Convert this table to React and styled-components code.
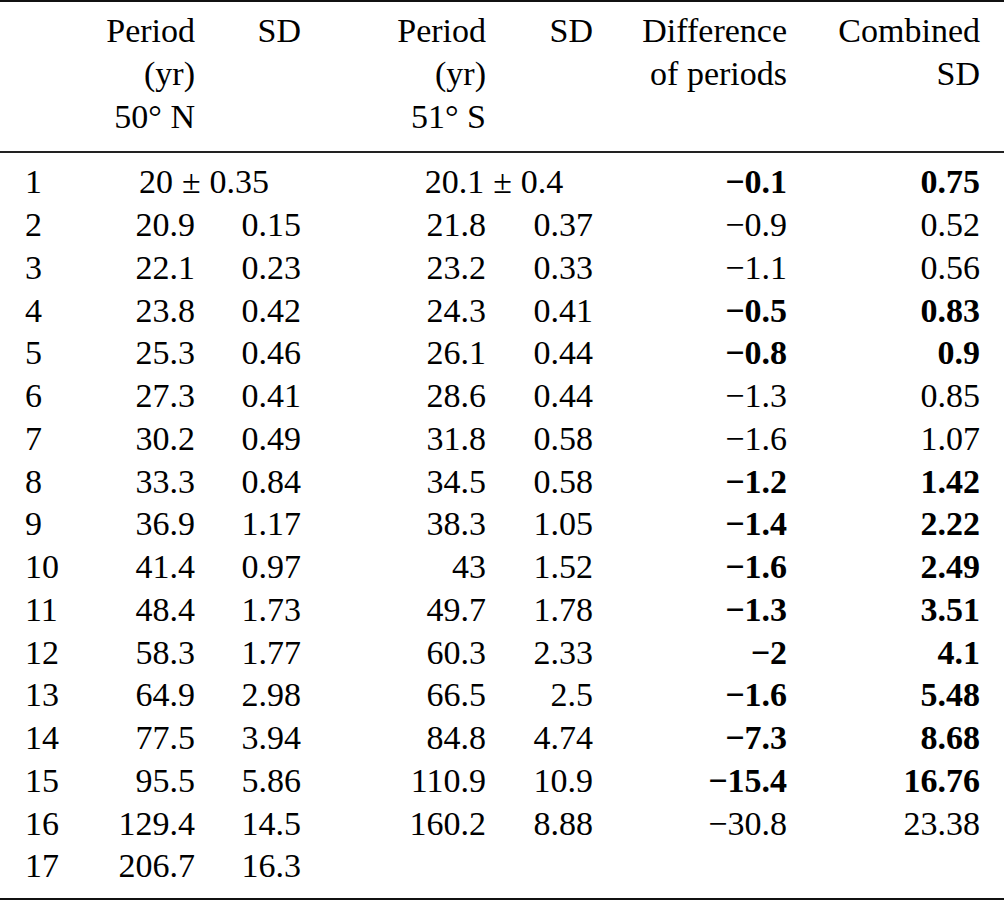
import React from "react";
import styled, { createGlobalStyle } from "styled-components";

const GlobalStyle = createGlobalStyle`
  html, body {
    margin: 0;
    padding: 0;
    background: #ffffff;
  }
  body {
    font-family: "Liberation Serif", "Times New Roman", serif;
    color: #000000;
  }
`;

const COLUMNS = "100px 95px 106px 185px 107px 194px 193px";

const Table = styled.div`
  width: 1004px;
  box-sizing: border-box;
  border-top: 2px solid #111;
  border-bottom: 2px solid #111;
  font-size: 34px;
  line-height: 42.75px;
`;

const Head = styled.div`
  display: grid;
  grid-template-columns: ${COLUMNS};
  padding: 8px 24px 13px 0;
  border-bottom: 2px solid #222;
`;

const Body = styled.div`
  padding: 8px 0 10px 0;
`;

const Row = styled.div`
  display: grid;
  grid-template-columns: ${COLUMNS};
  height: 42.75px;
  padding-right: 24px;
`;

const Cell = styled.div`
  text-align: right;
  white-space: nowrap;
  font-weight: ${props => (props.bold ? 700 : 400)};
`;

const IndexCell = styled.div`
  text-align: left;
  padding-left: 25px;
  white-space: nowrap;
`;

const SpanCell = styled.div`
  grid-column: span 2;
  text-align: center;
  white-space: nowrap;
  padding-left: ${props => props.offset}px;
`;

const Pm = styled.span`
  margin: 0 0.26em;
`;

const HeadCell = styled.div`
  text-align: right;
  white-space: nowrap;
`;

const headers = [
  [],
  ["Period", "(yr)", "50° N"],
  ["SD"],
  ["Period", "(yr)", "51° S"],
  ["SD"],
  ["Difference", "of periods"],
  ["Combined", "SD"],
];

const rows = [
  ["2", "20.9", "0.15", "21.8", "0.37", "−0.9", "0.52"],
  ["3", "22.1", "0.23", "23.2", "0.33", "−1.1", "0.56"],
  ["4", "23.8", "0.42", "24.3", "0.41", "−0.5", "0.83", true],
  ["5", "25.3", "0.46", "26.1", "0.44", "−0.8", "0.9", true],
  ["6", "27.3", "0.41", "28.6", "0.44", "−1.3", "0.85"],
  ["7", "30.2", "0.49", "31.8", "0.58", "−1.6", "1.07"],
  ["8", "33.3", "0.84", "34.5", "0.58", "−1.2", "1.42", true],
  ["9", "36.9", "1.17", "38.3", "1.05", "−1.4", "2.22", true],
  ["10", "41.4", "0.97", "43", "1.52", "−1.6", "2.49", true],
  ["11", "48.4", "1.73", "49.7", "1.78", "−1.3", "3.51", true],
  ["12", "58.3", "1.77", "60.3", "2.33", "−2", "4.1", true],
  ["13", "64.9", "2.98", "66.5", "2.5", "−1.6", "5.48", true],
  ["14", "77.5", "3.94", "84.8", "4.74", "−7.3", "8.68", true],
  ["15", "95.5", "5.86", "110.9", "10.9", "−15.4", "16.76", true],
  ["16", "129.4", "14.5", "160.2", "8.88", "−30.8", "23.38"],
  ["17", "206.7", "16.3"],
];

function App() {
  return (
    <>
      <GlobalStyle />
      <Table>
        <Head>
          {headers.map((lines, i) => (
            <HeadCell key={i}>
              {lines.map(l => (
                <div key={l}>{l}</div>
              ))}
            </HeadCell>
          ))}
        </Head>
        <Body>
          <Row>
            <IndexCell>1</IndexCell>
            <SpanCell offset={7}>
              20<Pm>±</Pm>0.35
            </SpanCell>
            <SpanCell offset={94}>
              20.1<Pm>±</Pm>0.4
            </SpanCell>
            <Cell bold>−0.1</Cell>
            <Cell bold>0.75</Cell>
          </Row>
          {rows.map(r => {
            const bold = r[7] === true;
            return (
              <Row key={r[0]}>
                <IndexCell>{r[0]}</IndexCell>
                {r.slice(1, 7).map((v, i) => (
                  <Cell key={i} bold={bold && i >= 4}>
                    {v}
                  </Cell>
                ))}
              </Row>
            );
          })}
        </Body>
      </Table>
    </>
  );
}

export default App;
